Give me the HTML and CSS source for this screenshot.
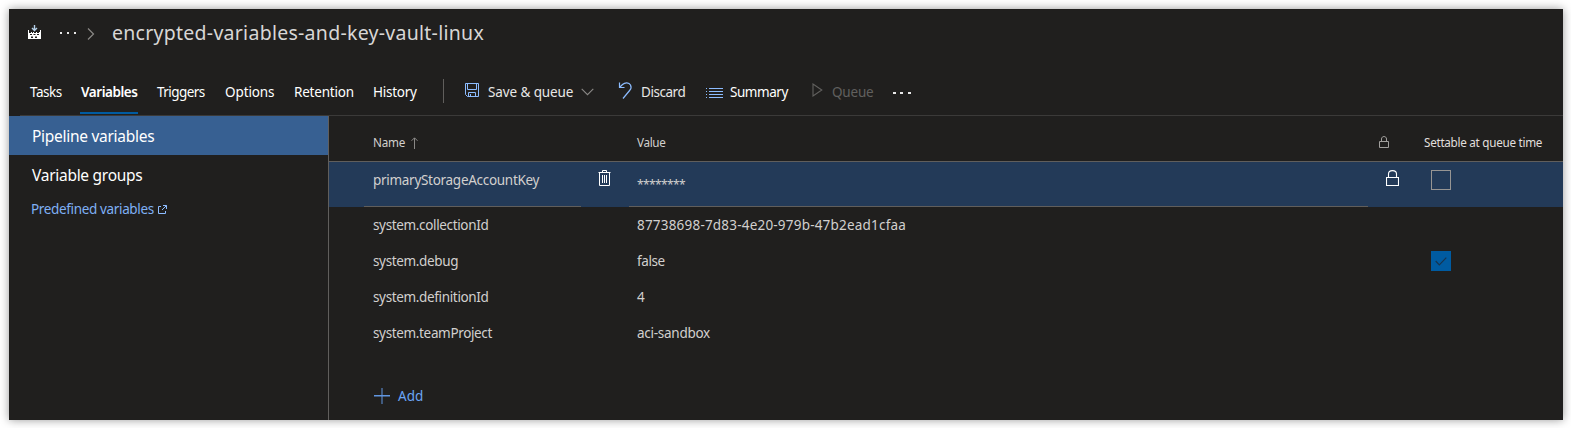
FILE: index.html
```html
<!DOCTYPE html>
<html lang="en">
<head>
<meta charset="utf-8">
<title>encrypted-variables-and-key-vault-linux</title>
<link rel="stylesheet" href="styles.css">
</head>
<body>
<div class="panel">
  <header class="crumbs">
    <svg class="build" width="14" height="15" viewBox="0 0 14 15"><path d="M0 5h1v3h2V7h1v1h1V7h1v1h2V7h1v1h2V7h1V5h1v9H0z" fill="#fff"/><path d="M2 9h2v1H2zM5.500 9h2v1h-2zM9 9h2v1H9zM3 11.500h2V13H3zM7 11.500h2V13H7z" fill="#201f1e"/><path d="M6.500 0v5M4 3l2.500 2.500L9 3" fill="none" stroke="#b5cfe8" stroke-width="1.400"/></svg>
    <svg class="dots" width="16" height="4" viewBox="0 0 16 4"><path d="M0 1h2v2H0zM7 1h2v2H7zM14 1h2v2h-2z" fill="#e8e8e8"/></svg>
    <svg class="chev" width="8" height="12" viewBox="0 0 8 12"><path d="M1 .5l5.500 5.500L1 11.500" fill="none" stroke="#8a8886" stroke-width="1.200"/></svg>
    <h1 class="title">encrypted-variables-and-key-vault-linux</h1>
  </header>
  <div class="toolbar">
    <nav class="tabs">
      <a class="tab t1">Tasks</a><a class="tab t2 active">Variables</a><a class="tab t3">Triggers</a><a class="tab t4">Options</a><a class="tab t5">Retention</a><a class="tab t6">History</a>
    </nav>
    <div class="commands">
      <div class="cmd save">
        <svg width="16" height="16" viewBox="0 0 16 16" fill="none" stroke="#8cbcff"><path d="M1.500 1.500h13v13h-11l-2-2zM3.500 1.500v6h9v-6M4.500 14.500v-4h7v4M6.500 12v2.500"/></svg>
        <span>Save &amp; queue</span>
        <svg class="down" width="13" height="8" viewBox="0 0 13 8"><path d="M.7 .8l5.800 5.800L12.300 .8" fill="none" stroke="#8a8886" stroke-width="1.100"/></svg>
      </div>
      <div class="cmd discard">
        <svg width="15" height="17" viewBox="0 0 15 17" fill="none" stroke="#8cbcff" stroke-width="1.200"><path d="M1.500 .5v5h5M1.500 5.500L4.500 2.500C7 .2 11 .2 12.500 3c1 2 .6 4-.9 5.500L5 16.500"/></svg>
        <span>Discard</span>
      </div>
      <div class="cmd summary">
        <svg width="17" height="11" viewBox="0 0 17 11"><path d="M0 0h1v1H0zM3 0h14v1H3zM0 3h1v1H0zM3 3h14v1H3zM0 6h1v1H0zM3 6h14v1H3zM0 9h1v1H0zM3 9h14v1H3z" fill="#8cbcff"/></svg>
        <span>Summary</span>
      </div>
      <div class="cmd queue">
        <svg width="11" height="14" viewBox="0 0 11 14"><path d="M1 1v12l8.800-6z" fill="none" stroke="#61605e" stroke-width="1.100"/></svg>
        <span>Queue</span>
      </div>
      <svg class="more" width="18" height="4" viewBox="0 0 18 4"><path d="M0 1h3v2H0zM7 1h3v2H7zM15 1h3v2h-3z" fill="#e8e8e8"/></svg>
    </div>
  </div>
  <div class="content">
    <aside class="side">
      <div class="sideitem selected"><span class="pv">Pipeline variables</span></div>
      <div class="sideitem"><span class="vg">Variable groups</span></div>
      <a class="link"><span>Predefined variables</span>
        <svg width="9" height="9" viewBox="0 0 9 9" fill="none" stroke="#8cbcff"><path d="M3 1.500H.5v7h7V6M5 .5h3.500V4M8.500 .5l-4.500 4.500"/></svg></a>
    </aside>
    <main class="grid">
      <div class="row head">
        <div class="name"><span class="hn">Name</span><svg class="up" width="7" height="12" viewBox="0 0 7 12" fill="none" stroke="#8a8886"><path d="M3.500 12V1M.5 3.800l3-3 3 3"/></svg></div>
        <div class="value"><span class="hv">Value</span></div>
        <div class="lock"><svg width="10" height="12" viewBox="0 0 10 12" fill="none" stroke="#a19f9d"><path d="M.5 5.500h9v6h-9zM2.500 5.500V3c0-3.300 5-3.300 5 0v2.500"/></svg></div>
        <div class="settable"><span class="hs">Settable at queue time</span></div>
      </div>
      <div class="row current">
        <div class="name"><span class="psk">primaryStorageAccountKey</span></div>
        <div class="trash"><svg width="14" height="16" viewBox="0 0 14 16" fill="none" stroke="#fff"><path d="M.5 2.500h12M4.500 2V.5h4V2M1.500 3v12.500h10V3M4.500 5v8M6.500 5v8M8.500 5v8"/></svg></div>
        <div class="value"><span class="stars">********</span></div>
        <div class="lock"><svg width="13" height="16" viewBox="0 0 13 16" fill="none" stroke="#fff"><path d="M.5 7.500h12v8H.5zM2.500 7.500V4c0-4.500 8-4.500 8 0v3.500" stroke-width="1.100"/></svg></div>
        <div class="settable"><i class="box"></i></div>
      </div>
      <div class="row"><div class="name"><span class="cid">system.collectionId</span></div><div class="value"><span class="uuid">87738698-7d83-4e20-979b-47b2ead1cfaa</span></div></div>
      <div class="row"><div class="name"><span class="dbg">system.debug</span></div><div class="value"><span class="fls">false</span></div><div class="lock"></div><div class="settable"><i class="box checked"><svg width="12" height="9" viewBox="0 0 12 9"><path d="M.7 4l3.600 3.800L11.300 .7" fill="none" stroke="#17344f" stroke-width="1.200"/></svg></i></div></div>
      <div class="row"><div class="name"><span class="did">system.definitionId</span></div><div class="value"><span>4</span></div></div>
      <div class="row"><div class="name"><span class="tp">system.teamProject</span></div><div class="value"><span class="aci">aci-sandbox</span></div></div>
      <a class="add"><svg width="16" height="16" viewBox="0 0 16 16"><path d="M7.500 0h1v16h-1zM0 7h16v1.500H0z" fill="#6196e0"/></svg><span>Add</span></a>
    </main>
  </div>
</div>
</body>
</html>
```
FILE: styles.css
```css
* { box-sizing: border-box; }
body { margin: 0; padding: 9px 8px 8px 9px; height: 428px; background: #fff; overflow: hidden;
  font-family: "Noto Sans", "Open Sans", sans-serif; font-size: 13.5px; line-height: 20px; color: #fff; }
span, a, h1 { white-space: nowrap; }
svg { display: block; flex: none; }
.panel { height: 411px; background: #201f1e; box-shadow: 0 0 9px rgba(0,0,0,.4); display: flex; flex-direction: column; }
.crumbs { height: 58px; padding: 10px 0 0 19px; display: flex; align-items: flex-start; }
.build { margin-top: 6px; }
.dots { margin: 12px 0 0 18px; }
.chev { margin: 9px 0 0 11px; }
.title { margin: 0 0 0 17px; font-size: 19.5px; line-height: 28px; font-weight: 400; color: #d8d7d6; letter-spacing: .27px; }

.toolbar { height: 49px; margin-left: 11px; border-bottom: 1px solid #3b3a39; display: flex; }
.tabs { display: flex; width: 423px; padding-left: 10px; }
.tab { height: 47px; padding-top: 15px; letter-spacing: -.1px; }
.t1 { width: 50px; letter-spacing: -.5px; }
.t2 { width: 58px; margin-right: 19px; padding-left: 1px; letter-spacing: -.45px; }
.t3 { width: 68px; letter-spacing: -.55px; }
.t4 { width: 69px; }
.t5 { width: 79px; letter-spacing: -.2px; }
.t6 { letter-spacing: -.25px; }
.active { font-weight: 600; border-bottom: 2px solid #005ba1; }
.commands { display: flex; align-items: flex-start; height: 24px; margin-top: 12px; border-left: 1px solid #605e5c; color: #e8e7e6; }
.cmd { display: flex; padding-top: 3px; }
.save { width: 154px; padding-left: 20px; }
.save span { width: 85px; margin-left: 8px; letter-spacing: -.1px; }
.down { margin: 6px 0 0 8px; }
.discard { width: 88px; padding-left: 20px; }
.discard span { margin-left: 8px; letter-spacing: -.45px; }
.summary { width: 104px; padding-left: 20px; color: #fff; }
.summary svg { margin-top: 6px; }
.summary span { margin-left: 7px; letter-spacing: -.45px; }
.queue { width: 82px; padding-left: 22px; color: #61605e; }
.queue svg { margin-top: 1px; }
.queue span { margin-left: 9px; letter-spacing: -.2px; }
.more { margin: 12px 0 0 21px; }

.content { display: flex; flex: 1; }
.side { width: 320px; border-right: 1px solid #605e5c; }
.sideitem { height: 39px; padding: 10px 0 0 23px; font-size: 15.5px; letter-spacing: -.28px; }
.selected { background: #376092; }
.link { display: flex; padding: 5px 0 0 22px; color: #7fb0f5; }
.link span { width: 122px; letter-spacing: -.35px; }
.link svg { margin: 6px 0 0 5px; }

.grid { flex: 1; }
.row { display: flex; height: 36px; padding: 8px 0 0 35px; color: #d2d0ce; }
.name { width: 217px; padding-left: 9px; letter-spacing: -.35px; }
.value { width: 739px; margin-left: 48px; padding-left: 8px; }
.head { height: 46px; padding-top: 16px; border-bottom: 1px solid #605e5c; font-size: 11.700px; }
.head .name { display: flex; letter-spacing: -.2px; }
.hv { letter-spacing: -.35px; }
.up { margin: 5px 0 0 6px; }
.head .lock { width: 44px; margin: 4px 0 0 11px; }
.head .settable { margin-left: 1px; color: #e1dfdd; letter-spacing: -.28px; }
.current { height: 45px; padding-top: 0; background: #233a58; }
.current .name, .current .value { height: 45px; padding-top: 8px; border-bottom: 1px solid #605e5c; }
.current .value { margin-left: 0; }
.psk { letter-spacing: -.29px; }
.uuid { letter-spacing: .2px; }
.fls { letter-spacing: -.4px; }
.aci { letter-spacing: -.27px; }
.trash { width: 48px; padding: 8px 0 0 17px; }
.stars { display: block; padding-top: 5px; font-size: 12px; letter-spacing: -.6px; }
.lock { width: 63px; padding-left: 0; }
.current .lock { padding: 8px 0 0 18px; }
.box { display: flex; align-items: center; justify-content: center; width: 20px; height: 20px; border: 1px solid #979593; }
.current .box { margin-top: 8px; }
.checked { background: #005ba1; border-color: #005ba1; }
.add { display: flex; align-items: center; width: 80px; margin-top: 34px; margin-left: 45px; color: #6aa5f5; }
.add span { margin-left: 8px; padding-top: 1px; }
```
